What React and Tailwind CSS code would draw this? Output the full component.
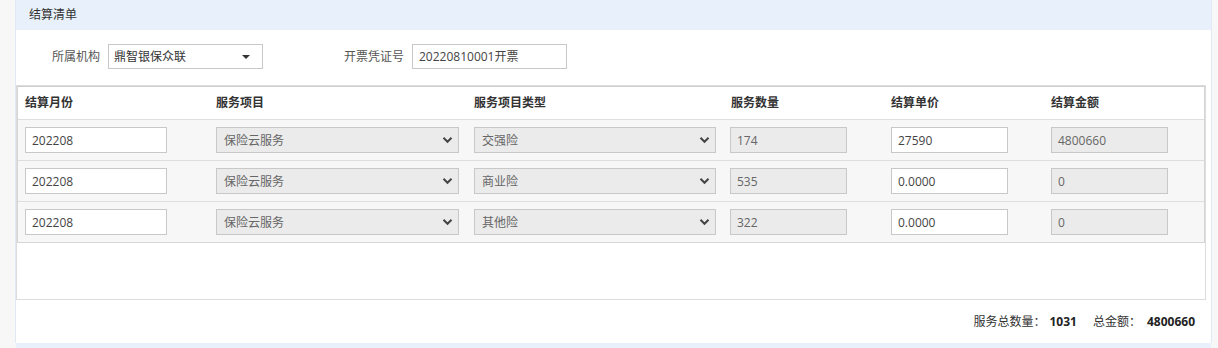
import React from "react";

const FONT = { fontFamily: '"Open Sans", "Noto Sans CJK SC", sans-serif' };

function Chevron() {
  return (
    <svg width="11" height="8" viewBox="0 0 11 8" className="shrink-0">
      <polyline points="1.5,1.8 5.5,5.8 9.5,1.8" fill="none" stroke="#444" strokeWidth="2" />
    </svg>
  );
}

function TextBox({ w, value, disabled }) {
  return (
    <div
      className={`h-[26px] border border-[#c8c8c8] pl-[6px] pt-[1px] flex items-center text-[12px] ${
        disabled ? "bg-[#ebebeb] text-[#666]" : "bg-white text-[#444]"
      } ${w}`}
    >
      {value}
    </div>
  );
}

function SelectBox({ w, value }) {
  return (
    <div
      className={`h-[26px] border border-[#c8c8c8] bg-[#ebebeb] pl-[7px] pr-[5px] flex items-center justify-between text-[12px] text-[#666] ${w}`}
    >
      <span className="pt-[1px]">{value}</span>
      <Chevron />
    </div>
  );
}

const rows = [
  { m: "202208", t: "交强险", n: "174", p: "27590", a: "4800660" },
  { m: "202208", t: "商业险", n: "535", p: "0.0000", a: "0" },
  { m: "202208", t: "其他险", n: "322", p: "0.0000", a: "0" },
];

const COLS = "grid grid-cols-[191px_258px_257px_160px_160px_160px]";

export default function App() {
  return (
    <div className="w-[1218px] h-[348px] overflow-hidden bg-[#f7f7f7]" style={FONT}>
      <div className="ml-[15px] w-[1197px] border-x border-[#e1eaf4] bg-white">
        <div className="h-[30px] bg-[#e8f1fb] pl-[13px] flex items-center text-[12px] text-[#333]">
          结算清单
        </div>
        <div className="pt-[14px] flex items-center text-[12px]">
          <div className="w-[84px] text-right text-[#555]">所属机构</div>
          <div className="ml-[8px] w-[155px] h-[25px] border border-[#c8c8c8] bg-white pl-[5px] pr-[12px] flex items-center justify-between text-[#333]">
            <span>鼎智银保众联</span>
            <svg width="8" height="4" viewBox="0 0 8 4">
              <polygon points="0,0 8,0 4,4" fill="#333" />
            </svg>
          </div>
          <div className="w-[141px] text-right text-[#555]">开票凭证号</div>
          <div className="ml-[8px] w-[155px] h-[25px] border border-[#c8c8c8] bg-white pl-[6px] flex items-center text-[#444]">
            20220810001开票
          </div>
        </div>
        <div className="mt-[16px] w-[1190px] h-[215px] border border-[#dcdcdc]">
          <div className="border border-[#d6d6d6] border-t-[#cfcfcf]">
            <div className={`${COLS} h-[32px] items-center bg-white text-[12px] font-bold text-[#333]`}>
              <div className="pl-[7px]">结算月份</div>
              <div className="pl-[7px]">服务项目</div>
              <div className="pl-[7px]">服务项目类型</div>
              <div className="pl-[7px]">服务数量</div>
              <div className="pl-[7px]">结算单价</div>
              <div className="pl-[7px]">结算金额</div>
            </div>
            {rows.map((r, i) => (
              <div
                key={i}
                className={`${COLS} h-[41px] items-center border-t border-[#dedede] bg-[#f7f7f7]`}
              >
                <div className="pl-[7px]">
                  <TextBox w="w-[142px]" value={r.m} />
                </div>
                <div className="pl-[7px]">
                  <SelectBox w="w-[243px]" value="保险云服务" />
                </div>
                <div className="pl-[7px]">
                  <SelectBox w="w-[242px]" value={r.t} />
                </div>
                <div className="pl-[6px]">
                  <TextBox w="w-[117px]" value={r.n} disabled />
                </div>
                <div className="pl-[7px]">
                  <TextBox w="w-[117px]" value={r.p} />
                </div>
                <div className="pl-[7px]">
                  <TextBox w="w-[117px]" value={r.a} disabled />
                </div>
              </div>
            ))}
          </div>
        </div>
        <div className="h-[43px] flex items-center justify-end pr-[16px] text-[12px] text-[#333]">
          <span>服务总数量：</span>
          <span className="ml-[4px] font-bold text-[#222]">1031</span>
          <span className="ml-[16px]">总金额：</span>
          <span className="ml-[6px] font-bold text-[#222]">4800660</span>
        </div>
      </div>
      <div className="ml-[16px] w-[1195px] h-[10px] bg-[#e8f1fb]" />
    </div>
  );
}
